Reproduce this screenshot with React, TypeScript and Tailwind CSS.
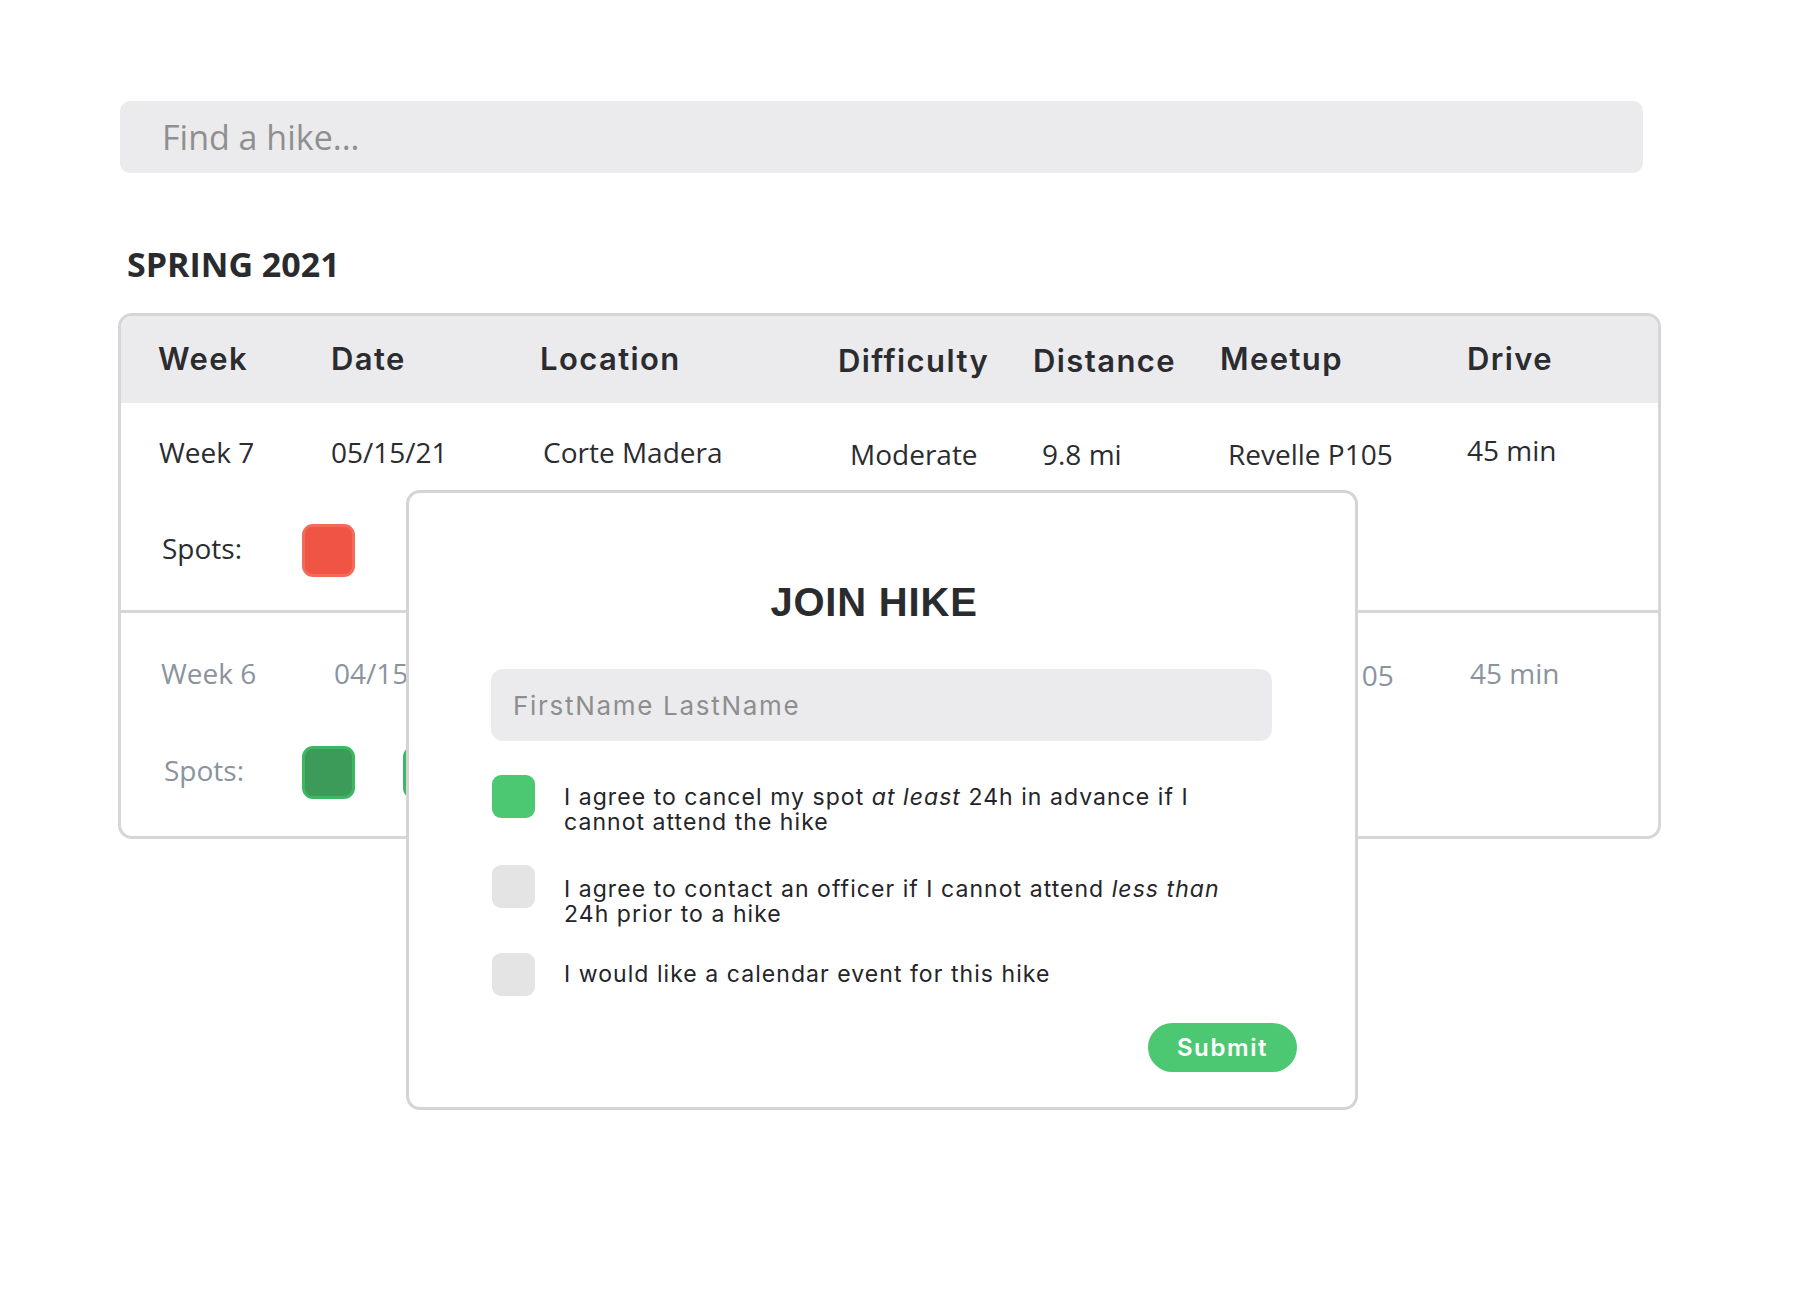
import React from "react";

const OPEN = { fontFamily: '"Open Sans", "Liberation Sans", sans-serif' };
const WORK = { fontFamily: 'Inter, "Liberation Sans", sans-serif' };
const HEAVY = { fontFamily: '"Liberation Sans", Arial, sans-serif' };

function Square({ kind }: { kind: "red" | "green" }) {
  return kind === "red" ? (
    <div className="w-[53px] h-[53px] shrink-0 rounded-[11px] border-[3px] border-[#f06b59] bg-[#f05444]" />
  ) : (
    <div className="w-[53px] h-[53px] shrink-0 rounded-[11px] border-[3px] border-[#3cb960] bg-[#3d9b5a]" />
  );
}

function Check({ on }: { on: boolean }) {
  return (
    <div
      className={
        "w-[43px] h-[43px] shrink-0 rounded-[9px] " +
        (on ? "bg-[#4dc872]" : "bg-[#e4e4e4]")
      }
    />
  );
}

export default function App() {
  return (
    <div className="relative w-full min-h-[1298px] bg-white text-[#2b2c30]">
      <div className="pt-[101px] pl-[120px]">
        {/* search */}
        <div
          className="w-[1523px] h-[72px] rounded-[10px] bg-[#ebebed] flex items-center pl-[42px] text-[34px] text-[#8f8f8f]"
          style={OPEN}
        >
          Find a hike...
        </div>

        {/* section title */}
        <div
          className="mt-[68px] ml-[7px] text-[34px] leading-[46px] font-bold text-[#2a2b2f]"
          style={OPEN}
        >
          SPRING 2021
        </div>

        {/* table */}
        <div className="mt-[26px] -ml-[2px] w-[1543px] border-[3px] border-[#d6d6d6] rounded-[14px] overflow-hidden">
          {/* header */}
          <div
            className="h-[87px] bg-[#ebebed] grid grid-cols-[173px_209px_298px_195px_187px_247px_1fr] items-center pl-[37px] text-[31px] font-semibold tracking-[1.4px]"
            style={WORK}
          >
            <div>Week</div>
            <div>Date</div>
            <div>Location</div>
            <div className="pt-[4px]">Difficulty</div>
            <div className="pt-[4px]">Distance</div>
            <div>Meetup</div>
            <div>Drive</div>
          </div>

          {/* row 1 */}
          <div className="pt-[30px] pb-[33px] border-b-[3px] border-[#d6d6d6]" style={OPEN}>
            <div className="grid grid-cols-[173px_209px_298px_195px_187px_247px_1fr] items-start pl-[37px] text-[28px] leading-[38px] text-[#2b2c30]">
              <div className="ml-[1px]">Week 7</div>
              <div>05/15/21</div>
              <div className="ml-[3px]">Corte Madera</div>
              <div className="ml-[12px] pt-[2px]">Moderate</div>
              <div className="ml-[9px] pt-[2px]">9.8 mi</div>
              <div className="ml-[8px] pt-[2px]">Revelle P105</div>
              <div className="-mt-[2px]">45 min</div>
            </div>
            <div className="mt-[51px] flex items-center pl-[41px]">
              <div className="w-[140px] mb-[5px] text-[28px] leading-[38px]">Spots:</div>
              <div className="flex gap-[48px]">
                <Square kind="red" />
              </div>
            </div>
          </div>

          {/* row 2 */}
          <div className="pt-[41px] pb-[37px]" style={OPEN}>
            <div className="grid grid-cols-[173px_209px_298px_195px_187px_247px_1fr] items-start pl-[40px] text-[28px] leading-[38px] text-[#8a939e]">
              <div>Week 6</div>
              <div>04/15/21</div>
              <div />
              <div />
              <div />
              <div className="ml-[6px] pt-[2px]">Revelle P105</div>
              <div>45 min</div>
            </div>
            <div className="mt-[52px] flex items-center pl-[43px]">
              <div className="w-[138px] mb-[5px] text-[28px] leading-[38px] text-[#8a939e]">Spots:</div>
              <div className="flex gap-[48px]">
                <Square kind="green" />
                <Square kind="green" />
                <Square kind="green" />
                <Square kind="green" />
              </div>
            </div>
          </div>
        </div>
      </div>

      {/* modal */}
      <div className="absolute left-[406px] top-[490px] w-[952px] h-[620px] rounded-[14px] border-[3px] border-[#d4d4d4] bg-white flex flex-col px-[82px]">
        <div
          className="mt-[87px] pr-[16px] text-center text-[40px] leading-[45px] font-bold tracking-[0.8px] text-[#2a2b2f]"
          style={HEAVY}
        >
          JOIN HIKE
        </div>

        <div
          className="mt-[44px] w-[781px] h-[72px] rounded-[12px] bg-[#ebebed] flex items-center pl-[22px] text-[26px] tracking-[1.7px] text-[#8e8e8e]"
          style={WORK}
        >
          FirstName LastName
        </div>

        <div className="text-[23px] leading-[25px] tracking-[1.05px] text-[#242529]" style={WORK}>
          <div className="mt-[34px] flex items-start pl-[1px]">
            <Check on={true} />
            <div className="ml-[29px] mt-[10px] whitespace-nowrap">
              I agree to cancel my spot <i>at least</i> 24h in advance if I
              <br />
              cannot attend the hike
            </div>
          </div>
          <div className="mt-[30px] flex items-start pl-[1px]">
            <Check on={false} />
            <div className="ml-[29px] mt-[12px] whitespace-nowrap">
              I agree to contact an officer if I cannot attend <i>less than</i>
              <br />
              24h prior to a hike
            </div>
          </div>
          <div className="mt-[26px] flex items-center pl-[1px]">
            <Check on={false} />
            <div className="ml-[29px] whitespace-nowrap">
              I would like a calendar event for this hike
            </div>
          </div>
        </div>

        <div className="mt-[27px] flex justify-end -mr-[24px]">
          <div
            className="w-[149px] h-[49px] rounded-full bg-[#4dc872] flex items-center justify-center text-white text-[24px] font-semibold tracking-[1.6px]"
            style={WORK}
          >
            Submit
          </div>
        </div>
      </div>
    </div>
  );
}
